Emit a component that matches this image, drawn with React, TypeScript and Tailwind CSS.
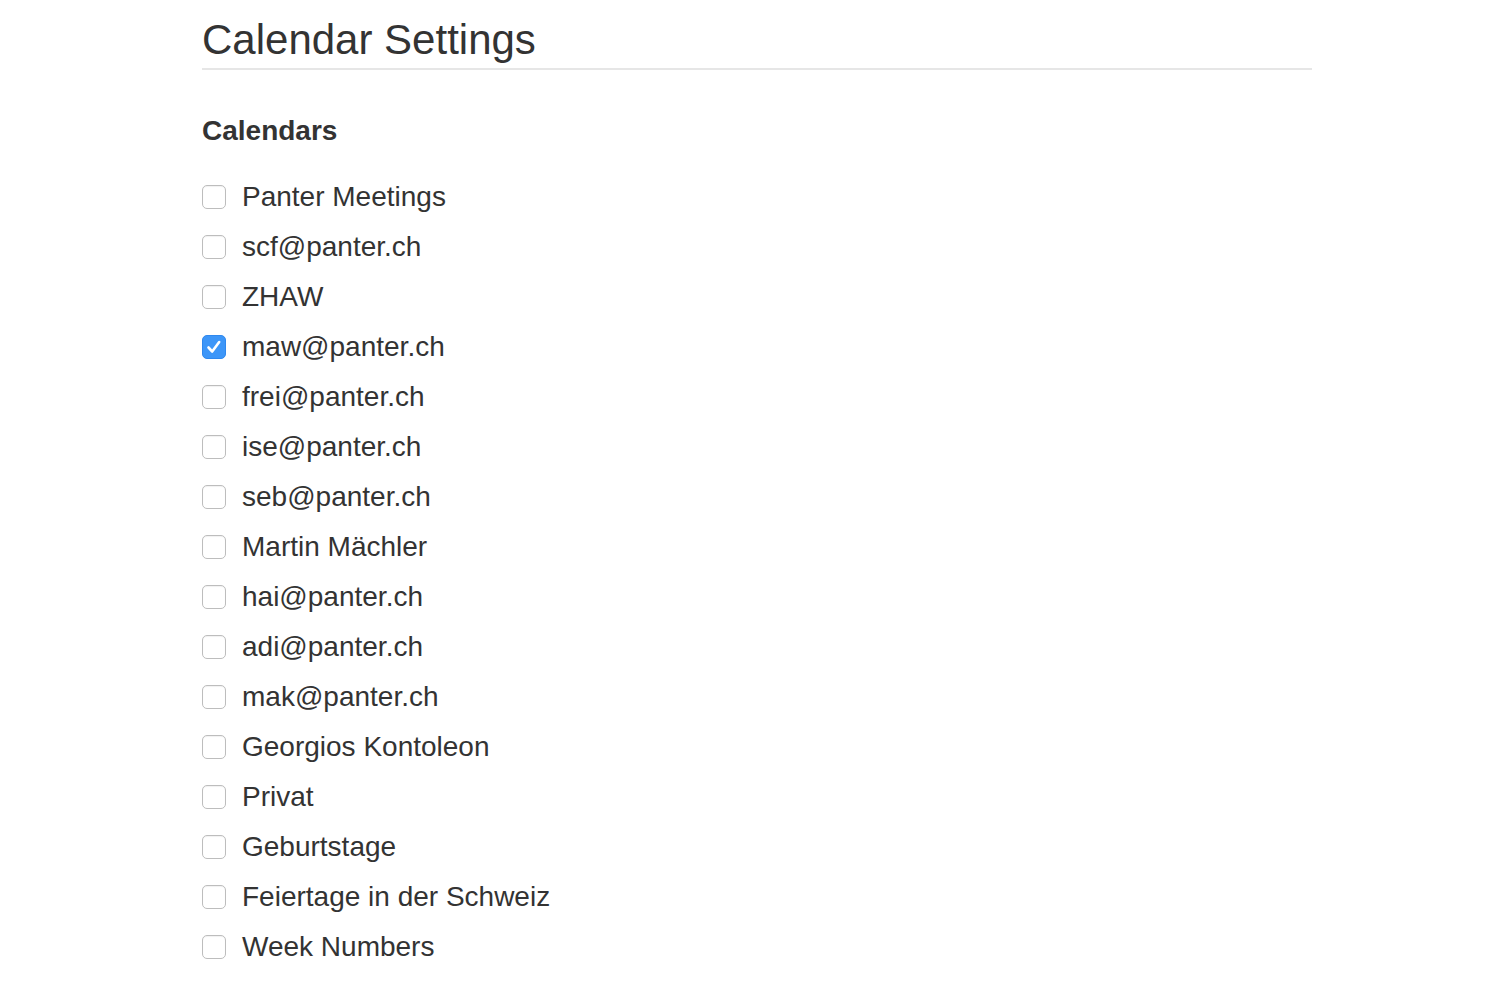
import React, { useState } from 'react';

const CALENDARS = [
  'Panter Meetings',
  'scf@panter.ch',
  'ZHAW',
  'maw@panter.ch',
  'frei@panter.ch',
  'ise@panter.ch',
  'seb@panter.ch',
  'Martin Mächler',
  'hai@panter.ch',
  'adi@panter.ch',
  'mak@panter.ch',
  'Georgios Kontoleon',
  'Privat',
  'Geburtstage',
  'Feiertage in der Schweiz',
  'Week Numbers',
];

const Checkbox: React.FC<{ checked: boolean; onToggle: () => void }> = ({ checked, onToggle }) => (
  <button
    type="button"
    onClick={onToggle}
    className={
      checked
        ? 'w-6 h-6 rounded-[5px] bg-[#3d96f8] border border-[#2f88ee] flex items-center justify-center shrink-0'
        : 'w-6 h-6 rounded-[5px] bg-white border border-[#bdbdbd] shadow-[inset_0_1px_1px_rgba(0,0,0,0.06)] shrink-0'
    }
  >
    {checked && (
      <svg width="20" height="20" viewBox="0 0 20 20" fill="none">
        <path d="M4.5 10.5 L8.2 14.5 L15.2 5" stroke="white" strokeWidth="2.6" strokeLinecap="round" strokeLinejoin="round" />
      </svg>
    )}
  </button>
);

export default function App() {
  const [checked, setChecked] = useState<Record<string, boolean>>({ 'maw@panter.ch': true });

  return (
    <div className="min-h-screen bg-white text-[#333] font-['Liberation_Sans',Arial,sans-serif]">
      <div className="w-[1110px] ml-[202px]">
        {/* Header */}
        <div className="pt-[14px] pb-[2px] border-b-2 border-[#e6e6e6]">
          <h1 className="text-[42px] leading-[52px]">Calendar Settings</h1>
        </div>

        <h3 className="mt-[43px] text-[28px] leading-[36px] font-bold">Calendars</h3>

        {/* Calendar list */}
        <div className="mt-[23px] flex flex-col">
          {CALENDARS.map((name) => (
            <label key={name} className="flex items-center gap-4 h-[50px] cursor-pointer">
              <Checkbox
                checked={!!checked[name]}
                onToggle={() => setChecked((c) => ({ ...c, [name]: !c[name] }))}
              />
              <span className="text-[28px] leading-[36px]">{name}</span>
            </label>
          ))}
        </div>
      </div>
    </div>
  );
}
